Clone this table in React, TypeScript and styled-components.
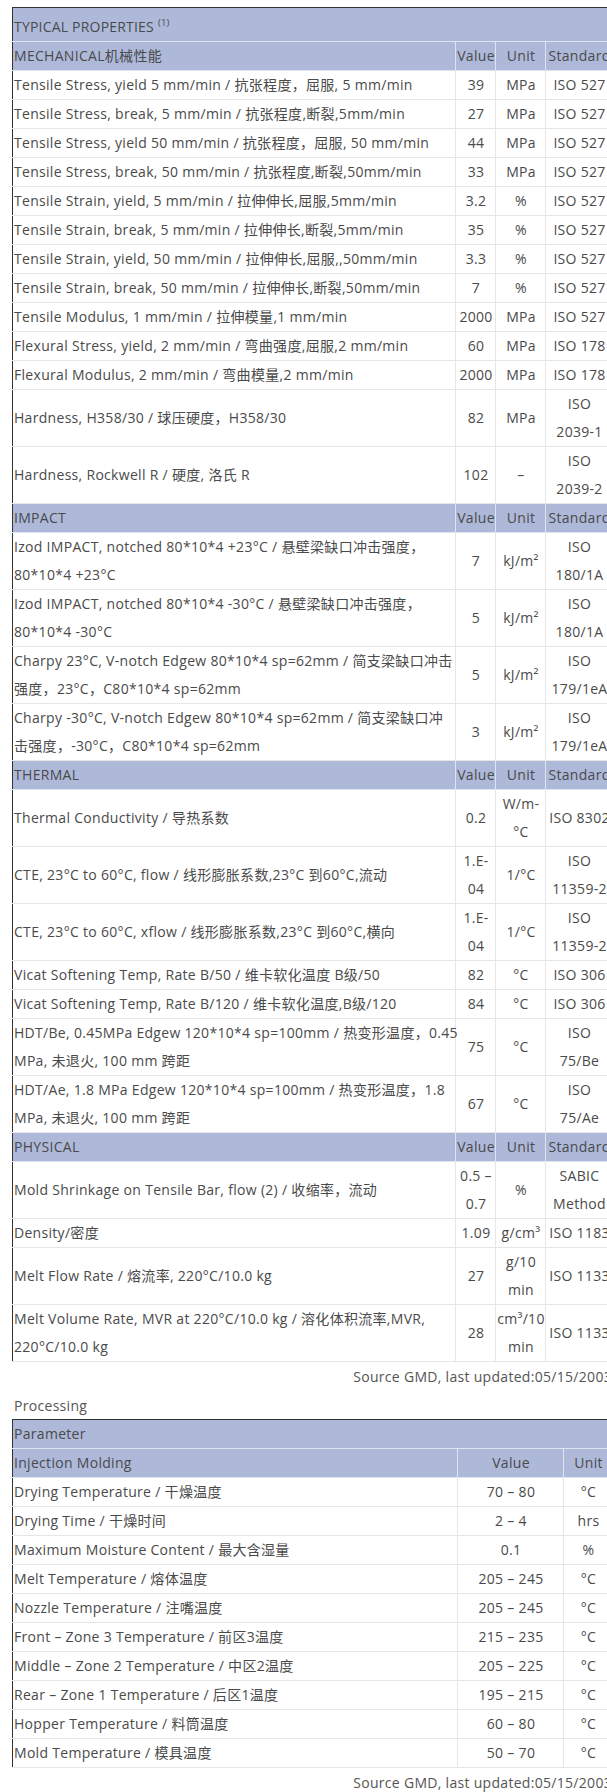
import React from "react";
import styled, { createGlobalStyle } from "styled-components";

const GlobalStyle = createGlobalStyle`
  html, body {
    margin: 0;
    padding: 0;
    background: #fff;
    overflow: hidden;
  }
  body {
    font-family: "Open Sans", "Noto Sans CJK SC", sans-serif;
    color: #4a4a4a;
  }
`;

const Page = styled.div`
  width: 600px;
  padding: 7px 0 0 12px;
`;

const Table = styled.table`
  width: 600px;
  table-layout: fixed;
  border-collapse: collapse;
  border: 1px solid #333;
  font-size: 14px;
  letter-spacing: 0.3px;
  line-height: 28px;
`;

const TitleCell = styled.th`
  background: #aeb9da;
  font-weight: normal;
  text-align: left;
  font-size: 14px;
  letter-spacing: 0.2px;
  padding: 5px 0 0 1px;
  line-height: 28px;
  border-bottom: 1px solid #dfe4f1;
`;

const Sup = styled.sup`
  font-size: 9.5px;
  line-height: 0;
  margin-left: 4px;
`;

const HeadCell = styled.th<{ $left?: boolean }>`
  background: #aeb9da;
  font-weight: normal;
  text-align: ${p => (p.$left ? "left" : "center")};
  padding: 0 0 0 1px;
  border: 1px solid #dfe4f1;
  border-top: none;
  white-space: nowrap;
  overflow: visible;
  &:first-child {
    border-left: none;
  }
`;

const Cell = styled.td<{ $left?: boolean }>`
  text-align: ${p => (p.$left ? "left" : "center")};
  vertical-align: middle;
  padding: 0 0 0 1px;
  border: 1px solid #e6e6e6;
  white-space: ${p => (p.$left ? "pre" : "pre-line")};
  overflow: visible;
  &:first-child {
    border-left: none;
  }
`;

const Source = styled.div`
  text-align: right;
  font-size: 14px;
  letter-spacing: 0.3px;
  line-height: 20px;
  padding: 5px 0 0;
  white-space: nowrap;
  color: #555;
`;

const SectionLabel = styled.div`
  font-size: 14px;
  letter-spacing: 0.3px;
  line-height: 20px;
  margin: 9px 0 3px 2px;
  color: #555;
`;

type Row = [string, string, string, string];

interface Section {
  title: string;
  rows: Row[];
}

const sections: Section[] = [
  {
    title: "MECHANICAL机械性能",
    rows: [
      ["Tensile Stress, yield 5 mm/min / 抗张程度，屈服, 5 mm/min", "39", "MPa", "ISO 527"],
      ["Tensile Stress, break, 5 mm/min / 抗张程度,断裂,5mm/min", "27", "MPa", "ISO 527"],
      ["Tensile Stress, yield 50 mm/min / 抗张程度，屈服, 50 mm/min", "44", "MPa", "ISO 527"],
      ["Tensile Stress, break, 50 mm/min / 抗张程度,断裂,50mm/min", "33", "MPa", "ISO 527"],
      ["Tensile Strain, yield, 5 mm/min / 拉伸伸长,屈服,5mm/min", "3.2", "%", "ISO 527"],
      ["Tensile Strain, break, 5 mm/min / 拉伸伸长,断裂,5mm/min", "35", "%", "ISO 527"],
      ["Tensile Strain, yield, 50 mm/min / 拉伸伸长,屈服,,50mm/min", "3.3", "%", "ISO 527"],
      ["Tensile Strain, break, 50 mm/min / 拉伸伸长,断裂,50mm/min", "7", "%", "ISO 527"],
      ["Tensile Modulus, 1 mm/min / 拉伸模量,1 mm/min", "2000", "MPa", "ISO 527"],
      ["Flexural Stress, yield, 2 mm/min / 弯曲强度,屈服,2 mm/min", "60", "MPa", "ISO 178"],
      ["Flexural Modulus, 2 mm/min / 弯曲模量,2 mm/min", "2000", "MPa", "ISO 178"],
      ["Hardness, H358/30 / 球压硬度，H358/30", "82", "MPa", "ISO\n2039-1"],
      ["Hardness, Rockwell R / 硬度, 洛氏 R", "102", "–", "ISO\n2039-2"],
    ],
  },
  {
    title: "IMPACT",
    rows: [
      ["Izod IMPACT, notched 80*10*4 +23°C / 悬壁梁缺口冲击强度，\n80*10*4 +23°C", "7", "kJ/m²", "ISO\n180/1A"],
      ["Izod IMPACT, notched 80*10*4 -30°C / 悬壁梁缺口冲击强度，\n80*10*4 -30°C", "5", "kJ/m²", "ISO\n180/1A"],
      ["Charpy 23°C, V-notch Edgew 80*10*4 sp=62mm / 简支梁缺口冲击\n强度，23°C，C80*10*4 sp=62mm", "5", "kJ/m²", "ISO\n179/1eA"],
      ["Charpy -30°C, V-notch Edgew 80*10*4 sp=62mm / 简支梁缺口冲\n击强度，-30°C，C80*10*4 sp=62mm", "3", "kJ/m²", "ISO\n179/1eA"],
    ],
  },
  {
    title: "THERMAL",
    rows: [
      ["Thermal Conductivity / 导热系数", "0.2", "W/m-\n°C", "ISO\u00a08302"],
      ["CTE, 23°C to 60°C, flow / 线形膨胀系数,23°C 到60°C,流动", "1.E-\n04", "1/°C", "ISO\n11359-2"],
      ["CTE, 23°C to 60°C, xflow / 线形膨胀系数,23°C 到60°C,横向", "1.E-\n04", "1/°C", "ISO\n11359-2"],
      ["Vicat Softening Temp, Rate B/50 / 维卡软化温度 B级/50", "82", "°C", "ISO 306"],
      ["Vicat Softening Temp, Rate B/120 / 维卡软化温度,B级/120", "84", "°C", "ISO 306"],
      ["HDT/Be, 0.45MPa Edgew 120*10*4 sp=100mm / 热变形温度，0.45\nMPa, 未退火, 100 mm 跨距", "75", "°C", "ISO\n75/Be"],
      ["HDT/Ae, 1.8 MPa Edgew 120*10*4 sp=100mm / 热变形温度，1.8\nMPa, 未退火, 100 mm 跨距", "67", "°C", "ISO\n75/Ae"],
    ],
  },
  {
    title: "PHYSICAL",
    rows: [
      ["Mold Shrinkage on Tensile Bar, flow (2) / 收缩率，流动", "0.5 –\n0.7", "%", "SABIC\nMethod"],
      ["Density/密度", "1.09", "g/cm³", "ISO\u00a01183"],
      ["Melt Flow Rate / 熔流率, 220°C/10.0 kg", "27", "g/10\nmin", "ISO\u00a01133"],
      ["Melt Volume Rate, MVR at 220°C/10.0 kg / 溶化体积流率,MVR,\n220°C/10.0 kg", "28", "cm³/10\nmin", "ISO\u00a01133"],
    ],
  },
];

const processing: [string, string, string][] = [
  ["Drying Temperature / 干燥温度", "70 – 80", "°C"],
  ["Drying Time / 干燥时间", "2 – 4", "hrs"],
  ["Maximum Moisture Content / 最大含湿量", "0.1", "%"],
  ["Melt Temperature / 熔体温度", "205 – 245", "°C"],
  ["Nozzle Temperature / 注嘴温度", "205 – 245", "°C"],
  ["Front – Zone 3 Temperature / 前区3温度", "215 – 235", "°C"],
  ["Middle – Zone 2 Temperature / 中区2温度", "205 – 225", "°C"],
  ["Rear – Zone 1 Temperature / 后区1温度", "195 – 215", "°C"],
  ["Hopper Temperature / 料筒温度", "60 – 80", "°C"],
  ["Mold Temperature / 模具温度", "50 – 70", "°C"],
];

const PropertiesTable: React.FC = () => (
  <Table>
    <colgroup>
      <col style={{ width: 443 }} />
      <col style={{ width: 40 }} />
      <col style={{ width: 50 }} />
      <col style={{ width: 67 }} />
    </colgroup>
    <tbody>
      <tr>
        <TitleCell colSpan={4}>
          TYPICAL PROPERTIES<Sup>(1)</Sup>
        </TitleCell>
      </tr>
      {sections.map(section => (
        <React.Fragment key={section.title}>
          <tr>
            <HeadCell $left>{section.title}</HeadCell>
            <HeadCell>Value</HeadCell>
            <HeadCell>Unit</HeadCell>
            <HeadCell>Standard</HeadCell>
          </tr>
          {section.rows.map(([name, value, unit, standard]) => (
            <tr key={name}>
              <Cell $left>{name}</Cell>
              <Cell>{value}</Cell>
              <Cell>{unit}</Cell>
              <Cell>{standard}</Cell>
            </tr>
          ))}
        </React.Fragment>
      ))}
    </tbody>
  </Table>
);

const ProcessingTable: React.FC = () => (
  <Table>
    <colgroup>
      <col style={{ width: 445 }} />
      <col style={{ width: 106 }} />
      <col style={{ width: 49 }} />
    </colgroup>
    <tbody>
      <tr>
        <HeadCell $left colSpan={3}>
          Parameter
        </HeadCell>
      </tr>
      <tr>
        <HeadCell $left>Injection Molding</HeadCell>
        <HeadCell>Value</HeadCell>
        <HeadCell>Unit</HeadCell>
      </tr>
      {processing.map(([name, value, unit]) => (
        <tr key={name}>
          <Cell $left>{name}</Cell>
          <Cell>{value}</Cell>
          <Cell>{unit}</Cell>
        </tr>
      ))}
    </tbody>
  </Table>
);

export default function App() {
  return (
    <>
      <GlobalStyle />
      <Page>
        <PropertiesTable />
        <Source>Source GMD, last updated:05/15/2003</Source>
        <SectionLabel>Processing</SectionLabel>
        <ProcessingTable />
        <Source>Source GMD, last updated:05/15/2003</Source>
      </Page>
    </>
  );
}
